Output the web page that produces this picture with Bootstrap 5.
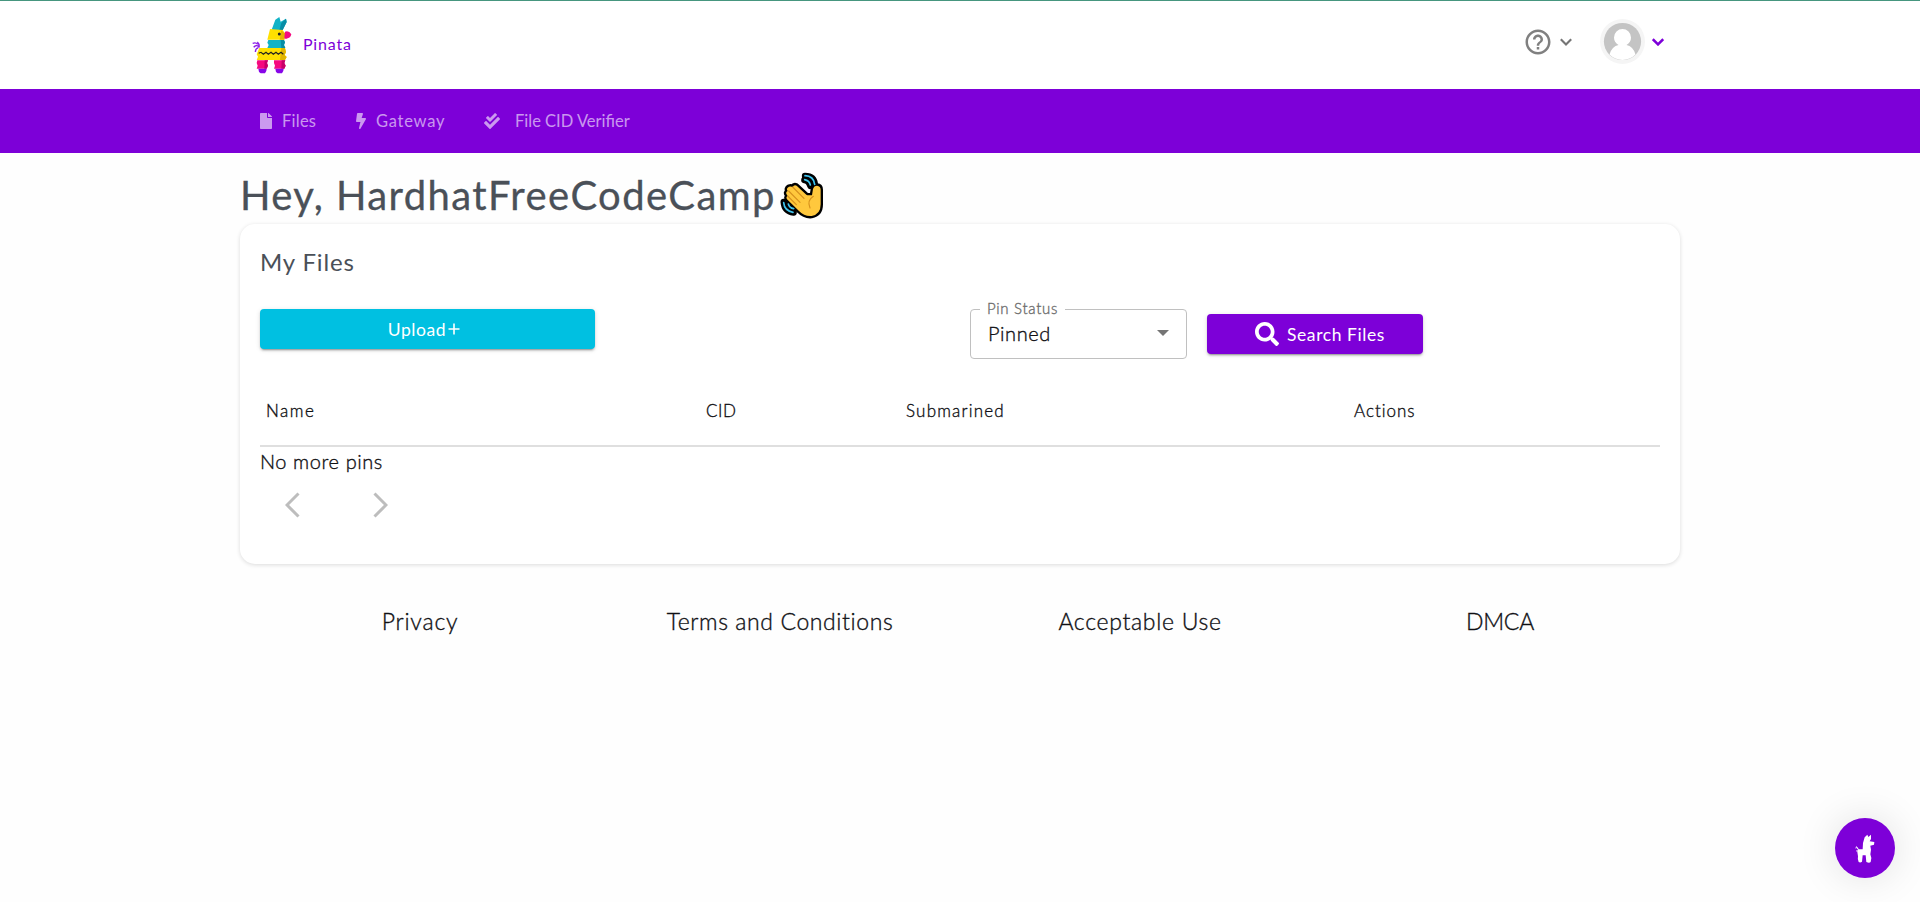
<!DOCTYPE html>
<html lang="en">
<head>
<meta charset="utf-8">
<title>Pinata</title>
<meta name="viewport" content="width=device-width, initial-scale=1">
<link rel="stylesheet" href="https://cdn.jsdelivr.net/npm/bootstrap@5.3.0/dist/css/bootstrap.min.css">
<style>
body{font-family:Lato,"Open Sans",sans-serif;color:#101014;background:#fefefe;height:902px;overflow:hidden}
.shell{width:1440px;margin:0 auto}
.topbar{height:89px;border-top:1px solid #46967f;background:#fff}
.brand-art{margin:16px 0 0 12px}
.brand-name{color:#7d00d8;font-size:16px;line-height:24px;margin:31px 0 0 11px;letter-spacing:.8px}
.help{margin:26px 0 0 0}
.menubar{height:64px;background:#7d00d8}
.menubar a{color:rgba(255,255,255,.6);font-size:16.5px;line-height:24px;text-decoration:none}
.hello{font-size:40px;line-height:48px;font-weight:400;color:#4a5058;margin:0;padding-top:18px;height:71px;letter-spacing:1.4px;-webkit-text-stroke:.3px #4a5058}
.panel{height:340px;border-radius:15px;background:#fff;box-shadow:0 1px 4px rgba(0,0,0,.14);padding:0 20px}
.panel h2{font-size:24px;line-height:32px;font-weight:400;color:#4a5058;margin:0;padding-top:22px;height:85px;letter-spacing:.85px}
.act{height:40px;border-radius:4px;color:#fff;font-size:17.5px;line-height:24px;border:0;box-shadow:0 3px 1px -2px rgba(0,0,0,.2),0 2px 2px rgba(0,0,0,.14),0 1px 5px rgba(0,0,0,.12);letter-spacing:.58px}
.act .t{padding-top:1px}
.act-up{width:335px;background:#00c0e1;padding:0 7px 0 0}
.act-find{width:216px;background:#7d00d8;margin:5px 0 0 20px;padding:0 0 0 10px}
.pick{width:217px;height:50px;border:1px solid #c0c0c0;border-radius:4px;margin-left:375px;position:relative;font-size:20px;padding:0 17px 2px 17px;letter-spacing:.6px}
.pick-label{position:absolute;left:9px;top:-13px;padding:0 7px;background:#fff;font-size:15px;line-height:22px;color:#6c6c6c;letter-spacing:.7px}
.heads{height:88px;padding-top:40px;border-bottom:2px solid #dfdfdf;font-size:17px;line-height:24px;letter-spacing:1.2px}
.heads>div{padding-left:6px}
.none{font-size:20px;line-height:30px;height:46px;margin-top:-1px;letter-spacing:.58px}
.foot{font-size:23px;line-height:32px;padding-top:41px;letter-spacing:.6px}
.heads,.none,.foot,.pick{font-weight:300;-webkit-text-stroke:.35px currentColor}
.fab{position:fixed;right:25px;bottom:24px;width:60px;height:60px;border-radius:50%;background:#7d00d8;box-shadow:0 0 40px rgba(0,0,0,.12)}
svg{display:block;flex:none}
.t{white-space:nowrap;display:inline-block}
.snug{letter-spacing:-.2px}
</style>
</head>
<body>
<header class="topbar">
 <div class="shell d-flex align-items-start">
  <svg class="brand-art" width="40" height="58.3" viewBox="50 52 120 175">
   <path d="M52 131q10-4 15 3M55 143q8-9 15-2M60 157q0-10 9-13M66 127q7 6 5 17" fill="none" stroke="#8a1be8" stroke-width="4"/>
   <path d="M109 90L120 60l12-8 4 14 16-9 2 10-12 24-10 4z" fill="#12b3c7"/><path d="M132 92l6-22 14-13 2 10-12 24z" fill="#078ca5"/>
   <path d="M104 88l38 3 8 11-3 18H96z" fill="#ffe000"/><path d="M138 92l12 10-3 18h-14z" fill="#e2b400"/>
   <circle cx="132" cy="103" r="4.500" fill="#222"/><path d="M149 96q12-4 19 8-2 10-11 12-8 4-10-2z" fill="#f5097f"/>
   <path d="M99 121h47l3 7-3 8 4 9H96l4-9-4-7z" fill="#12b3c7"/><path d="M136 121h10l3 7-3 8 4 9h-12z" fill="#078ca5"/>
   <path d="M72 145h77l3 12-4 9 6 6-5 9H64l4-10-4-7z" fill="#ffe000"/><path d="M138 145h11l3 12-4 9 6 6-5 9h-15z" fill="#e2b400"/>
   <path d="M70 161l7-3 7 6 8-6 7 6 8-6 7 6 8-6 7 6 8-6 7 6" fill="none" stroke="#222" stroke-width="3.500"/>
   <path d="M66 182h32l-3 8 3 8-4 9H64l3-9-3-8zM116 182h34l-3 8 4 8-4 9h-31l3-9-3-8z" fill="#f5097f"/>
   <path d="M88 182h10l-3 8 3 8-4 9h-7zM139 182h11l-3 8 4 8-4 9h-9z" fill="#c70068"/>
   <path d="M69 207h25q0 9-5 14h-13q-7-4-7-14zM120 207h25q0 9-5 14h-13q-7-4-7-14z" fill="#8706e8"/>
  </svg>
  <span class="t brand-name">Pinata</span>
  <div class="d-flex ms-auto align-items-start">
   <svg class="help" width="30" height="30" viewBox="0 0 24 24" fill="#808080"><path d="M11 18h2v-2h-2v2zm1-16C6.480 2 2 6.480 2 12s4.480 10 10 10 10-4.480 10-10S17.520 2 12 2zm0 18c-4.410 0-8-3.590-8-8s3.590-8 8-8 8 3.590 8 8-3.590 8-8 8zm0-14c-2.210 0-4 1.790-4 4h2c0-1.100.9-2 2-2s2 .9 2 2c0 2-3 1.750-3 5h2c0-2.250 3-2.500 3-5 0-2.210-1.790-4-4-4z"/></svg>
   <svg width="12" height="45" viewBox="0 0 12 45" style="margin-left:7px"><path d="M.8 38.200L6 43.400l5.200-5.200" fill="none" stroke="#757575" stroke-width="2.100"/></svg>
   <svg width="45" height="45" viewBox="0 0 45 45" style="margin:18px 0 0 28px"><circle cx="22.500" cy="22.500" r="22.500" fill="#f5f5f5"/><circle cx="22.500" cy="22.500" r="18.600" fill="#c4c4c4"/><path d="M9.500 35.600Q12 27 18.500 26Q14 23 14 18.500A8.500 8.500 0 0 1 31 18.500Q31 23 26.500 26Q33 27 35.500 35.600Q30 41 22.500 41T9.500 35.600z" fill="#fff"/></svg>
   <svg width="12" height="45" viewBox="0 0 12 45" style="margin:0 16px 0 7px"><path d="M.8 38.200L6 43.400l5.200-5.200" fill="none" stroke="#7d00d8" stroke-width="2.500"/></svg>
  </div>
 </div>
</header>
<nav class="menubar">
 <div class="shell d-flex align-items-center h-100" style="padding-left:20px">
  <a href="#" class="d-flex align-items-center" style="width:96px"><svg width="12" height="16" viewBox="0 0 384 512" fill="currentColor"><path d="M224 136V0H24C10.700 0 0 10.700 0 24v464c0 13.300 10.700 24 24 24h336c13.300 0 24-10.700 24-24V160H248c-13.200 0-24-10.800-24-24zm160-14.100v6.100H256V0h6.100c6.400 0 12.500 2.500 17 7l97.900 98c4.500 4.500 7 10.600 7 16.900z"/></svg><span class="t" style="margin-left:10px;letter-spacing:.25px">Files</span></a>
  <a href="#" class="d-flex align-items-center" style="width:128px"><svg width="10" height="16" viewBox="0 0 320 512" fill="currentColor"><path d="M296 160H180.600l42.600-129.800C227.200 15 215.700 0 200 0H56C44 0 33.800 8.900 32.200 20.800l-32 240C-1.700 275.200 9.500 288 24 288h118.700L96.600 482.500c-3.600 15.200 8 29.500 23.300 29.500 8.400 0 16.400-4.400 20.800-12l176-304c9.300-15.900-2.200-36-20.700-36z"/></svg><span class="t" style="margin-left:10px;letter-spacing:.75px">Gateway</span></a>
  <a href="#" class="d-flex align-items-center"><svg width="16" height="16" viewBox="0 0 512 512" fill="currentColor"><path d="M505 174.800l-39.600-39.600c-9.400-9.400-24.600-9.400-33.900 0L192 374.700 80.600 263.200c-9.400-9.400-24.600-9.400-33.900 0L7 302.900c-9.400 9.400-9.400 24.600 0 34L175 505c9.400 9.400 24.600 9.400 33.900 0l296-296.200c9.400-9.500 9.400-24.700.1-34zm-324.300 106c6.200 6.300 16.400 6.300 22.600 0l208-208.200c6.200-6.300 6.200-16.400 0-22.600L366.100 4.700c-6.200-6.300-16.400-6.300-22.600 0L192 156.200l-55.400-55.500c-6.200-6.300-16.400-6.300-22.600 0L68.700 146c-6.200 6.300-6.200 16.400 0 22.600l112 112.200z"/></svg><span class="t" style="margin-left:15px">File CID Verifier</span></a>
 </div>
</nav>
<main class="shell">
 <h1 class="hello d-flex"><span class="t">Hey, HardhatFreeCodeCamp</span>
  <svg width="44" height="47" viewBox="31 22 132 141" style="margin:1px 0 0 4px" stroke-linecap="round" stroke-linejoin="round">
   <g fill="none" stroke="#000" stroke-width="19"><path d="M106 34q28 0 30 28M104 46q14 2 18 18M42 112q2 28 30 32M56 118q3 12 16 16"/></g>
   <path d="M127 92l3-19q3-10 12-10 11 1 11 12v44q0 30-27 35-22 2-38-15L52 104q-4-7 2-10l-2-3q-6-8 2-12-6-8 4-13 6-2 11 1 4-8 12-4L110 90q2 2 8 2z" fill="#ffc83d" stroke="#000" stroke-width="14"/>
   <g fill="none" stroke="#3fc4ee" stroke-width="5"><path d="M106 33q26 1 29 26M105 45q14 3 17 16M42 114q2 24 28 29M56 118q3 12 16 14"/></g>
   <path d="M127 92l3-19q3-10 12-10 11 1 11 12v44q0 30-27 35-22 2-38-15L52 104q-4-7 2-10l-2-3q-6-8 2-12-6-8 4-13 6-2 11 1 4-8 12-4L110 90q2 2 8 2z" fill="#ffc83d"/>
   <g fill="none" stroke="#d6901d" stroke-width="3.500"><path d="M69 67l34 34M57 79l34 34M54 94l26 26M131 95q-20 13-10 35"/></g>
  </svg>
 </h1>
 <section class="panel">
  <h2><span class="t">My Files</span></h2>
  <div class="d-flex align-items-start">
   <button class="btn act act-up d-flex justify-content-center align-items-center"><span class="t">Upload</span><svg width="12" height="12" viewBox="0 0 12 12" style="margin-left:2px"><path d="M6 .5v11M.5 6h11" stroke="#fff" stroke-width="1.600"/></svg></button>
   <div class="pick d-flex align-items-center justify-content-between"><span class="pick-label">Pin Status</span><span class="t">Pinned</span><svg width="12" height="6" viewBox="0 0 12 6"><path d="M0 0h12L6 6z" fill="#757575"/></svg></div>
   <button class="btn act act-find d-flex align-items-center justify-content-center"><svg width="24" height="24" viewBox="0 0 512 512" fill="#fff"><path d="M505 442.700L405.300 343c-4.500-4.500-10.600-7-17-7H372c27.600-35.300 44-79.700 44-128C416 93.100 322.900 0 208 0S0 93.100 0 208s93.100 208 208 208c48.300 0 92.700-16.400 128-44v16.300c0 6.400 2.500 12.500 7 17l99.700 99.700c9.400 9.400 24.600 9.400 33.900 0l28.300-28.300c9.400-9.400 9.400-24.600.1-34zM208 336c-70.700 0-128-57.200-128-128 0-70.700 57.200-128 128-128 70.700 0 128 57.200 128 128 0 70.700-57.200 128-128 128z"/></svg><span class="t" style="margin-left:8px">Search Files</span></button>
  </div>
  <div class="heads d-flex">
   <div style="width:440px"><span class="t" style="letter-spacing:1.5px">Name</span></div><div style="width:200px"><span class="t" style="letter-spacing:.55px">CID</span></div><div style="width:448px"><span class="t">Submarined</span></div><div><span class="t" style="letter-spacing:1px">Actions</span></div>
  </div>
  <div class="none">No more pins</div>
  <div class="d-flex" style="padding-left:25px;gap:73px">
   <svg width="15" height="26" viewBox="0 0 15 26"><path d="M13.500 1.500L2 13l11.500 11.500" fill="none" stroke="#bdbdbd" stroke-width="3"/></svg>
   <svg width="15" height="26" viewBox="0 0 15 26"><path d="M1.500 1.500L13 13 1.500 24.500" fill="none" stroke="#bdbdbd" stroke-width="3"/></svg>
  </div>
 </section>
 <footer class="foot row g-0 text-center"><div class="col-3"><span class="t" style="letter-spacing:.8px">Privacy</span></div><div class="col-3">Terms and Conditions</div><div class="col-3"><span class="t" style="letter-spacing:.7px">Acceptable Use</span></div><div class="col-3"><span class="t snug">DMCA</span></div></footer>
</main>
<a class="fab" href="#" aria-label="Help"><svg width="60" height="60" viewBox="0 0 180 180"><path d="M84 75l5-17 8-8 3 7 8-7v13l-4 7 14 2-1 8-11 3 2 12-2 14 3 11-2 12q-4 4-13 0l-2-20H83l-2 19q-5 4-10 1-4-8-2-17l-2-13 2-8h14z" fill="#fff"/><path d="M61 90q6-5 9 5M63 99q7-3 7 3M64 85l6 9" fill="none" stroke="#fff" stroke-width="2.500"/></svg></a>
<script src="https://cdn.jsdelivr.net/npm/bootstrap@5.3.0/dist/js/bootstrap.bundle.min.js"></script>
</body>
</html>
